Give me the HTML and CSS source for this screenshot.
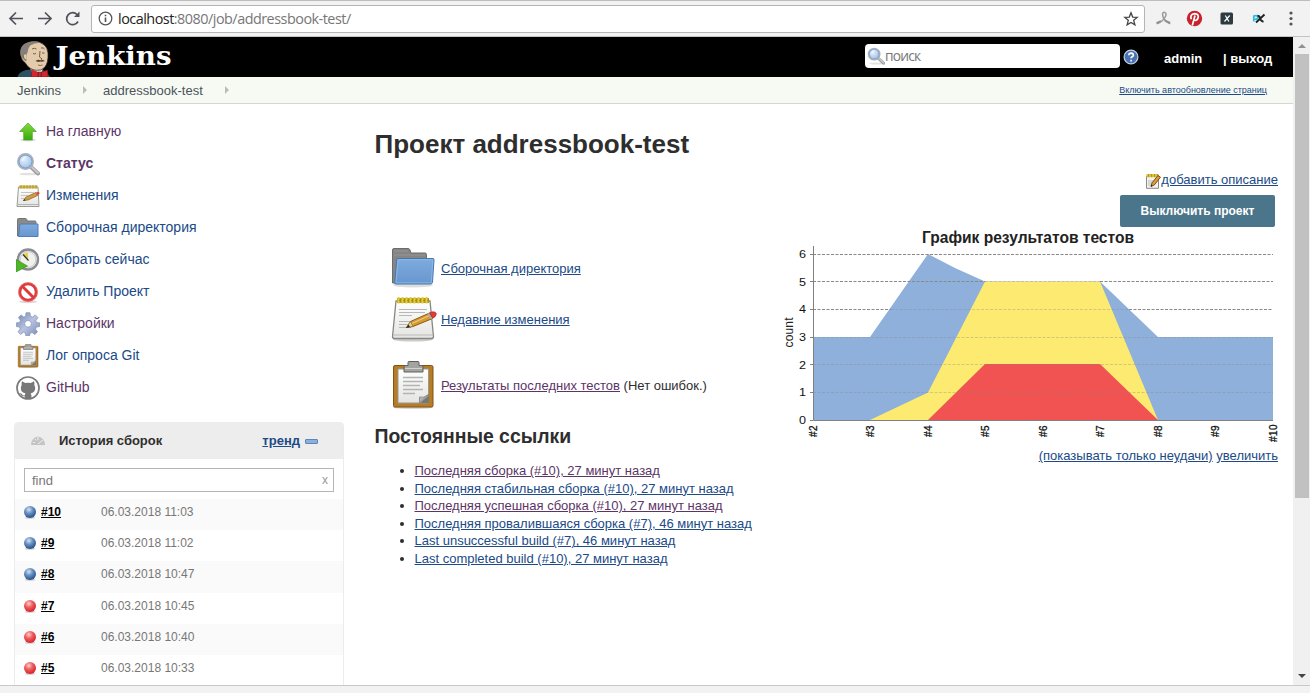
FILE: index.html
```html
<!DOCTYPE html>
<html lang="ru">
<head>
<meta charset="utf-8">
<title>addressbook-test [Jenkins]</title>
<link rel="stylesheet" href="styles.css">
</head>
<body>
<svg class="defs" width="0" height="0">
  <defs>
    <linearGradient id="gBlue" x1="0" y1="0" x2="0" y2="1"><stop offset="0" stop-color="#7fabdd"/><stop offset="1" stop-color="#6797d0"/></linearGradient>
    <linearGradient id="gPaper" x1="0" y1="0" x2="0" y2="1"><stop offset="0" stop-color="#fff"/><stop offset="1" stop-color="#e4e4e2"/></linearGradient>
    <linearGradient id="gGreen" x1="0" y1="0" x2="0" y2="1"><stop offset="0" stop-color="#86dc3c"/><stop offset="1" stop-color="#38a80c"/></linearGradient>
    <linearGradient id="gGear" x1="0" y1="0" x2="1" y2="1"><stop offset="0" stop-color="#6f82b4"/><stop offset=".5" stop-color="#b9c3df"/><stop offset="1" stop-color="#7285b5"/></linearGradient>
    <radialGradient id="gLens" cx=".4" cy=".35" r=".7"><stop offset="0" stop-color="#e6f1fb"/><stop offset="1" stop-color="#98bce3"/></radialGradient>
    <radialGradient id="gOk" cx=".4" cy=".3" r=".7"><stop offset="0" stop-color="#d5e3f2"/><stop offset=".45" stop-color="#6a93c4"/><stop offset="1" stop-color="#274f87"/></radialGradient>
    <radialGradient id="gBad" cx=".4" cy=".3" r=".7"><stop offset="0" stop-color="#fbd0d0"/><stop offset=".45" stop-color="#f06060"/><stop offset="1" stop-color="#d8202a"/></radialGradient>
    <symbol id="folder" viewBox="0 0 48 48">
      <ellipse cx="24" cy="41" rx="20" ry="2.500" fill="#ddd"/>
      <path d="M3.500 39V6q0-1.500 1.500-1.500H19q1.500 0 2 1.500l1 3H36q1.500 0 1.500 1.500V39z" fill="#858585" stroke="#6c6c6c"/>
      <path d="M5 7h14M5 11h31" stroke="#959595" fill="none"/>
      <path d="M9 14.500H44q1.200 0 1 1.500L43.500 38q-.3 2-2 2H7q-1.500 0-1.300-2L7.800 16q.2-1.500 1.200-1.500z" fill="url(#gBlue)" stroke="#4377b5"/>
      <path d="M9 15.700H43.800L42.300 38.800H7z" fill="none" stroke="#94badf" stroke-width=".8"/>
    </symbol>
    <symbol id="notepad" viewBox="0 0 48 48">
      <ellipse cx="24" cy="44.500" rx="20" ry="2" fill="#ccc"/>
      <path d="M7 6H41L44.500 41.500q0 2-2 2H5.500q-2 0-2-2z" fill="url(#gPaper)" stroke="#888883" stroke-width="1.300"/>
      <path d="M4.500 40H44" stroke="#bbb"/>
      <path d="M10 14.500H38M10 17.500H36M10 20.500H23M10 26.500H31M10 29.500H27M10 32.500H22" stroke="#b7b7b7" stroke-width="1.200"/>
      <path d="M8 3h32v5H8z" fill="#b39a10"/>
      <path d="M9.500 2v6.500M13.500 2v6.500M17.500 2v6.500M21.500 2v6.500M25.500 2v6.500M29.500 2v6.500M33.500 2v6.500M37.500 2v6.500" stroke="#e3cd45" stroke-width="2"/>
      <path d="M8.500 5.500h31" stroke="#917800" stroke-dasharray="1 3" stroke-dashoffset="-2"/>
      <path d="M17.500 32.500l4-6L40.500 18l3 5.500L24 31.500z" fill="#d39a35" stroke="#8c5b12"/>
      <path d="M23 28.500L41.500 20" stroke="#f1c873" stroke-width="1.300"/>
      <path d="M17.500 32.500l4-6 2.500 5z" fill="#e8cf9b" stroke="#8c6a35" stroke-width=".7"/>
      <path d="M17 33l2.500-3.200 1.500 2.300z" fill="#222"/>
      <path d="M38.500 18.800l2-1 3 5.500-2 1z" fill="#aaa"/>
      <path d="M40.500 17.800l2.500-.9q3.500-.4 4.300 1.500 0 3.300-3.500 4.700z" fill="#e33c36" stroke="#a82520" stroke-width=".7"/>
    </symbol>
    <symbol id="clipboard" viewBox="0 0 48 48">
      <ellipse cx="24" cy="46.500" rx="20" ry="1.300" fill="#ccc"/>
      <rect x="4.500" y="4.500" width="39.500" height="41.500" rx="1.500" fill="#b67c26" stroke="#815411"/>
      <path d="M9 8H39.500V42H9z" fill="url(#gPaper)" stroke="#999"/>
      <path d="M14 16.500H34M14 20.500H34M14 24.500H31M14 28.500H34M14 32.500H26" stroke="#b3b3b3" stroke-width="1.500"/>
      <path d="M30.500 42V36q4 1.500 9-2.500z" fill="#b1b1ae" stroke="#777" stroke-width=".7"/>
      <path d="M31 42l9-8v8z" fill="#777"/>
      <path d="M15 11V6q0-1.500 1.500-1.500H19V1.500q0-1 1-1h9q1 0 1 1v3h2.500q1.500 0 1.500 1.500v5z" fill="#a3a49f" stroke="#5f605d"/>
      <path d="M16 7.500H33" stroke="#d1d2ce"/>
    </symbol>
    <symbol id="lens" viewBox="0 0 24 24">
      <ellipse cx="13" cy="22" rx="10" ry="1.300" fill="#e2e2e2"/>
      <path d="M15 15l7 6.500" stroke="#9a9a9a" stroke-width="4" stroke-linecap="round"/>
      <path d="M15.500 15l6.500 6" stroke="#c9c9c9" stroke-width="2" stroke-linecap="round"/>
      <circle cx="9.500" cy="9.500" r="7.500" fill="url(#gLens)" stroke="#aab1bd" stroke-width="2"/>
      <circle cx="9.500" cy="9.500" r="6.400" fill="none" stroke="#6d98cf" stroke-width=".8"/>
      <path d="M6 9q.5-3.500 4-4" stroke="#fff" fill="none"/>
    </symbol>
    <symbol id="ball-ok" viewBox="0 0 14 14"><ellipse cx="7" cy="12.700" rx="5" ry="1" fill="#ccc"/><circle cx="7" cy="7" r="6" fill="url(#gOk)"/></symbol>
    <symbol id="ball-bad" viewBox="0 0 14 14"><ellipse cx="7" cy="12.700" rx="5" ry="1" fill="#ccc"/><circle cx="7" cy="7" r="6" fill="url(#gBad)"/></symbol>
  </defs>
</svg>

<div class="window">
  <div class="toolbar">
    <svg class="nav" width="72" height="20" viewBox="0 0 72 20" fill="none" stroke="#50525a" stroke-width="1.700">
      <path d="M15 9.500H2.500M8 3.500l-6 6 6 6"/>
      <path d="M30 9.500H42.500M37 3.500l6 6-6 6"/>
      <path d="M70 12.500A6 6 0 1 1 69 5.500"/><path d="M71.500 2.500V8h-5.500z" fill="#50525a" stroke="none"/>
    </svg>
    <div class="address">
      <svg width="15" height="15" viewBox="0 0 15 15" fill="none" stroke="#555" stroke-width="1.300"><circle cx="7.500" cy="7.500" r="6.300"/><path d="M7.500 6.500v4.500M7.500 3.700v1.600" stroke-width="1.600"/></svg>
      <span class="url"><b>localhost</b>:8080/job/addressbook-test/</span>
      <svg class="star" width="16" height="16" viewBox="0 0 16 16" fill="none" stroke="#444" stroke-width="1.300"><path d="M8 1.800l1.700 4.300 4.500.3-3.500 2.900 1.200 4.600L8 11.400l-3.900 2.500 1.200-4.600L1.800 6.400l4.500-.3z"/></svg>
    </div>
    <svg class="exts" width="150" height="20" viewBox="0 0 150 20">
      <path d="M7.500 5q.5-2 2.200-1.600 2 .6 1 3.600Q8.500 12 2.500 14.500M7.500 5q0 3.500 2.500 6t5 3" fill="none" stroke="#999" stroke-width="1.500"/>
      <path d="M1 13.300l4.500-2 .8 1.500-4.300 2.800zM9.500 10.500l6 2.500-.5 2.500-5.500-3z" fill="#929292"/>
      <circle cx="39.500" cy="9.500" r="7.700" fill="#c8232c"/>
      <path d="M37.300 16.500L40 6.500M36.300 10.300Q34.500 5.200 39.700 4.700 44.300 5 43 9.200 41.500 12.600 38.800 10.900" fill="none" stroke="#fff" stroke-width="1.700"/>
      <rect x="65.500" y="3.500" width="12.500" height="12" rx="1.500" fill="#2c3a42"/>
      <path d="M70.300 6.500l3.600 6M74.700 6.500l-5.200 6" stroke="#fff" stroke-width="1.200"/>
      <path d="M98.800 12.500V7q3-1 4.200.5.500 2.500-3.500 3" fill="none" stroke="#25c0de" stroke-width="1.700"/>
      <path d="M101 13.500L109.500 5.500M102.500 6.800q2 0 2.500 2.500t3.500 3.500" fill="none" stroke="#202427" stroke-width="1.900"/>
      <g fill="#555"><circle cx="136" cy="4" r="1.600"/><circle cx="136" cy="9.500" r="1.600"/><circle cx="136" cy="15" r="1.600"/></g>
    </svg>
  </div>

  <div class="viewport">
    <div class="page">
      <header class="header">
        <svg class="brand" width="160" height="40" viewBox="0 0 160 40">
          <path d="M1.500 40Q2.500 35 10 33l14-1q6 1 10 8z" fill="#2c5263"/>
          <path d="M14 31l4 9h6l3-9z" fill="#eee"/>
          <path d="M4.500 16Q5 5 18 4.500 31 5 32 16q.5 10-3.500 14.500-3 3.500-8 2.800-7.500-.5-11.500-7.800-4-2-4.500-9.500z" fill="#e3cbab" stroke="#2a2521" stroke-width=".7"/>
          <path d="M4.500 18Q2.500 6 16 4.500q5-.6 9 1.300-6-.3-10.500 2.500-3 3-2.800 6.700l-1.200 2.500-.3 6.700q-4.300-2.200-5.700-6.200z" fill="#85807b"/>
          <path d="M10 17q-3-1-2.500 3 .5 3 3 3" fill="#e3cbab" stroke="#6d5949" stroke-width=".7"/>
          <path d="M24 14l-.5 6q3.500 1.500 2 3.500M16 12q2.500-1.500 4.500 0M25 11q2.500-.7 3.500 1M17 16.500q1.500.8 3 0M26 16h2.500" fill="none" stroke="#54453a" stroke-width=".8"/>
          <path d="M19.500 24q2.500-2.300 5.500-.7 2-.8 4 .7-3 1.200-4.500.5-2 1-5-.5z" fill="#5a4435"/>
          <path d="M22 28q2.500 1 4.500 0" stroke="#8b4c3e" stroke-width=".8" fill="none"/>
          <path d="M15.500 32.500l7 3v4.500h-7zM31.500 33l-6.500 2.500v4.500h7zM22 35h3.500v5H22z" fill="#d3272e" stroke="#6f1619" stroke-width=".5"/>
          <text class="brand-name" x="39.500" y="28" textLength="116" lengthAdjust="spacingAndGlyphs">Jenkins</text>
        </svg>
        <div class="search"><svg width="18" height="18"><use href="#lens"/></svg><span>поиск</span></div>
        <svg class="help" width="16" height="16" viewBox="0 0 16 16"><circle cx="8" cy="8" r="6.900" fill="#4b72b3" stroke="#c2d1e8" stroke-width="1.200"/><path d="M5.700 6.300q.2-2.200 2.400-2.200 2.300.1 2.300 2Q10.300 7.300 8.800 8q-.7.400-.7 1.300M8.100 10.700v1.700" fill="none" stroke="#fff" stroke-width="1.600"/></svg>
        <a class="user">admin</a>
        <span class="logout">| <a>выход</a></span>
      </header>
      <nav class="crumbs">
        <a>Jenkins</a><i class="arrow"></i><a>addressbook-test</a><i class="arrow"></i>
        <a class="auto">Включить автообновление страниц</a>
      </nav>

      <div class="body">
        <aside class="side">
          <div class="tasks">
            <a class="task seen"><svg width="24" height="24" viewBox="0 0 24 24"><ellipse cx="12" cy="20" rx="8" ry="1.500" fill="#ddd"/><path d="M12 3l8.300 8.500h-4V20H7.700v-8.500h-4z" fill="url(#gGreen)" stroke="#45a51d" stroke-width=".7"/></svg>На главную</a>
            <a class="task seen current"><svg width="24" height="24"><use href="#lens"/></svg>Статус</a>
            <a class="task"><svg width="24" height="24" viewBox="0 0 24 24"><path d="M2.500 3H22L23 22.500H1z" fill="url(#gPaper)" stroke="#9a9a96"/><path d="M1.500 20.500H22.500" stroke="#b5b5b5"/><path d="M5 8.500H18M5 11.500H12M5 14.500H10" stroke="#c4c4c4"/><path d="M3 1.500H21.500V4.500H3z" fill="#cdb84a"/><path d="M5 1v3.500M8 1v3.500M11 1v3.500M14 1v3.500M17 1v3.500M20 1v3.500" stroke="#9f8c2b" stroke-width=".8"/><path d="M7.500 16.500L10 13l10-4.500 1.500 3L12 16z" fill="#d19a45" stroke="#8b5c1b" stroke-width=".7"/><path d="M20 8.500l2-.7q2 .7 1.500 2l-2 1.700z" fill="#df4a40"/><path d="M7 17l1.500-2 1 1.500z" fill="#333"/></svg>Изменения</a>
            <a class="task"><svg width="24" height="24" viewBox="0 0 24 24"><path d="M1.500 20V3.500q0-1 1-1H9.500q1 0 1.300 1L11 5h8q1 0 1 1v14z" fill="#8a8a8a" stroke="#747474"/><path d="M4 8H22V20.500H2.500z" fill="url(#gBlue)" stroke="#4d7fb9"/></svg>Сборочная директория</a>
            <a class="task"><svg width="24" height="24" viewBox="0 0 24 24"><circle cx="12" cy="11.500" r="10" fill="#f1f1ec" stroke="#8b8b95" stroke-width="2.400"/><circle cx="12" cy="11.500" r="7.800" fill="none" stroke="#bbb" stroke-width=".7"/><path d="M12 11.500V4.500Q8 5 6.500 7z" fill="#e5d04c"/><path d="M7 6.500l5.500 6" fill="none" stroke="#333" stroke-width="1.200"/><path d="M0 11.500l11.500 6.500L0 24z" fill="#4fb52a" stroke="#36921c" stroke-width=".7"/></svg>Собрать сейчас</a>
            <a class="task"><svg width="24" height="24" viewBox="0 0 24 24"><ellipse cx="12" cy="21.800" rx="9" ry="1.500" fill="#e3d4d4"/><circle cx="12" cy="12" r="8.300" fill="#fff" stroke="#dc3a3c" stroke-width="3"/><path d="M6.300 6.300l11.400 11.400" stroke="#dc3a3c" stroke-width="3"/><circle cx="12" cy="12" r="9.400" fill="none" stroke="#ec8585" stroke-width=".6"/></svg>Удалить Проект</a>
            <a class="task seen"><svg width="24" height="24" viewBox="0 0 24 24"><path fill-rule="evenodd" d="M10 .7h4l.5 3.500 2 .9 2.800-2.200 2.700 2.700-2.200 3 .8 2 3.300.3v3.600l-3.500.6-.9 2 2 2.800-2.700 2.600-2.700-2-2 .8-.6 3h-3.600l-.5-3.200-2-.8-2.800 2.100-2.600-2.600L4.200 17l-.8-2-3.200-.5v-3.600l3.300-.5.9-2.100-2-2.800L5 2.900 7.800 5l1.800-.8zM12 8.500a3.300 3.300 0 1 0 .01 0z" fill="url(#gGear)" stroke="#8493b8" stroke-width=".7"/></svg>Настройки</a>
            <a class="task"><svg width="24" height="24"><use href="#clipboard"/></svg>Лог опроса Git</a>
            <a class="task seen"><svg width="24" height="24" viewBox="0 0 24 24"><circle cx="12" cy="12" r="11" fill="#fff" stroke="#7b7b7b" stroke-width="1.700"/><path d="M6 5.300l3.300 1.800q2.700-.6 5.400 0L18 5.300q.8 2 .3 3.700 1.300 1.800.8 4.300-.6 3.500-4.500 4.100.8.800.8 2V23H8.800v-2.800q-3.500.5-4.500-2.200l-1-1q2-.3 3.100 1.800.8 1 2.400.5.1-1.200.8-1.900-4.200-.6-4.700-4.100-.4-2.500.8-4.300-.5-1.700.3-3.700z" fill="#777"/></svg>GitHub</a>
          </div>

          <section class="history">
            <div class="history-head">
              <svg width="16" height="16" viewBox="0 0 16 16"><path d="M1 12Q1 5 8 3.500q7 1.500 7 8.500z" fill="#c4c4c4"/><path d="M8 4v3M3 9.500h2M5 6l1.500 1.500M8 11l5-4" stroke="#eee" fill="none"/></svg>
              <b>История сборок</b>
              <a>тренд</a><i class="collapse"></i>
            </div>
            <div class="find"><span>find</span><span class="clear">x</span></div>
            <div class="build"><svg width="14" height="14"><use href="#ball-ok"/></svg><a>#10</a><span>06.03.2018 11:03</span></div>
            <div class="build"><svg width="14" height="14"><use href="#ball-ok"/></svg><a>#9</a><span>06.03.2018 11:02</span></div>
            <div class="build"><svg width="14" height="14"><use href="#ball-ok"/></svg><a>#8</a><span>06.03.2018 10:47</span></div>
            <div class="build"><svg width="14" height="14"><use href="#ball-bad"/></svg><a>#7</a><span>06.03.2018 10:45</span></div>
            <div class="build"><svg width="14" height="14"><use href="#ball-bad"/></svg><a>#6</a><span>06.03.2018 10:40</span></div>
            <div class="build"><svg width="14" height="14"><use href="#ball-bad"/></svg><a>#5</a><span>06.03.2018 10:33</span></div>
          </section>
        </aside>

        <main class="main">
          <h1>Проект addressbook-test</h1>
          <div class="describe"><svg width="16" height="16" viewBox="0 0 16 16"><path d="M1.500 3H13.500V15.300H1.500z" fill="#f1f1ef" stroke="#8a8a86"/><path d="M3 8h6M3 10h5M3 12h4" stroke="#bbb"/><path d="M1.500 1h12v3.300h-12z" fill="#dcc238"/><path d="M3.500 1v3M6.500 1v3M9.500 1v3M12.500 1v3" stroke="#a38c1c" stroke-width=".8"/><path d="M6 13.500l1-3.700L13 2.500l2.500 1.700L9.300 12z" fill="#d79b3b" stroke="#6e4510" stroke-width=".9"/><path d="M5.800 13.700l.5-2 1.300 1z" fill="#222"/></svg><a>добавить описание</a></div>
          <div class="actions"><button class="disable">Выключить проект</button></div>
          <div class="columns">
            <div class="left">
              <div class="summary"><svg width="48" height="48"><use href="#folder"/></svg><a>Сборочная директория</a></div>
              <div class="summary"><svg width="48" height="48"><use href="#notepad"/></svg><a>Недавние изменения</a></div>
              <div class="summary tests"><svg width="48" height="48"><use href="#clipboard"/></svg><a class="seen">Результаты последних тестов</a><span>&nbsp;(Нет ошибок.)</span></div>
              <h2>Постоянные ссылки</h2>
              <ul class="links">
                <li><a class="seen">Последняя сборка (#10), 27 минут назад</a></li>
                <li><a>Последняя стабильная сборка (#10), 27 минут назад</a></li>
                <li><a class="seen">Последняя успешная сборка (#10), 27 минут назад</a></li>
                <li><a>Последняя провалившаяся сборка (#7), 46 минут назад</a></li>
                <li><a>Last unsuccessful build (#7), 46 минут назад</a></li>
                <li><a>Last completed build (#10), 27 минут назад</a></li>
              </ul>
            </div>
            <div class="trend">
              <svg class="chart" width="500" height="219" viewBox="780 227 500 219">
                <text class="chart-title" x="922" y="243" textLength="212" lengthAdjust="spacingAndGlyphs">График результатов тестов</text>
                <path d="M813 420V337H870L928 254L955 268L985 281.500H1100L1158 337H1273V420z" fill="#8eb0da"/>
                <path d="M870 420L928 392.500L985 281.500H1100L1158 420z" fill="#fceb70"/>
                <path d="M928 420L985 364H1100L1158 420z" fill="#f15352"/>
                <path class="grid" d="M813 254.500H1273M813 281.500H985M1100 281.500H1273M813 309.500H891M1129 309.500H1273"/>
                <path class="grid faint" d="M985 281.500H1100M891 309.500H1129M813 337.500H1273M813 364.500H1273M813 392.500H1273"/>
                <path class="axis" d="M813.500 246V420.500H1273M810 254.500h3M810 281.500h3M810 309.500h3M810 337.500h3M810 364.500h3M810 392.500h3M810 420.500h3"/>
                <g class="ticks">
                  <text x="799" y="258" textLength="7" lengthAdjust="spacingAndGlyphs">6</text><text x="799" y="286" textLength="7" lengthAdjust="spacingAndGlyphs">5</text><text x="799" y="313" textLength="7" lengthAdjust="spacingAndGlyphs">4</text><text x="799" y="341" textLength="7" lengthAdjust="spacingAndGlyphs">3</text><text x="799" y="369" textLength="7" lengthAdjust="spacingAndGlyphs">2</text><text x="799" y="396" textLength="7" lengthAdjust="spacingAndGlyphs">1</text><text x="799" y="424" textLength="7" lengthAdjust="spacingAndGlyphs">0</text>
                  <g class="builds"><text transform="translate(816.500 437) rotate(-90)">#2</text><text transform="translate(873.500 437) rotate(-90)">#3</text><text transform="translate(931.500 437) rotate(-90)">#4</text><text transform="translate(988.500 437) rotate(-90)">#5</text><text transform="translate(1046.500 437) rotate(-90)">#6</text><text transform="translate(1103.500 437) rotate(-90)">#7</text><text transform="translate(1161.500 437) rotate(-90)">#8</text><text transform="translate(1218.500 437) rotate(-90)">#9</text><text transform="translate(1276.500 442) rotate(-90)">#10</text></g>
                </g>
                <text class="axis-name" transform="translate(793 347.500) rotate(-90)" textLength="30">count</text>
              </svg>
              <div class="trend-links"><a>(показывать только неудачи)</a> <a>увеличить</a></div>
            </div>
          </div>
        </main>
      </div>
    </div>
    <div class="scrollbar"><i class="up"></i><i class="thumb"></i><i class="down"></i></div>
  </div>
  <div class="bottom-strip"></div>
</div>
</body>
</html>
```
FILE: styles.css
```css
* { box-sizing: border-box; }
body { margin: 0; font-family: "Liberation Sans", Arial, sans-serif; font-size: 13px; color: #2e2e2e; background: #fff; overflow: hidden; }
.defs { position: absolute; }
svg { flex: none; display: block; }
a { color: #204a87; text-decoration: underline; }
.seen { color: #5c3566; }
.window { width: 1310px; height: 693px; display: flex; flex-direction: column; }

.toolbar { height: 37px; flex: none; display: flex; align-items: center; background: #f2f2f2; border-top: 1px solid #bdbdbd; border-bottom: 1px solid #c4c4c4; padding-left: 8px; }
.nav { margin-right: 11px; }
.address { width: 1054px; height: 28px; display: flex; align-items: center; background: #fff; border: 1px solid #b5b5b5; border-radius: 3px; padding: 0 5px 0 6px; }
.url { margin-left: 5px; font-family: "Open Sans", sans-serif; font-size: 14.4px; letter-spacing: -0.5px; color: #777; white-space: nowrap; }
.url b { font-weight: 400; color: #222; }
.star { margin-left: auto; }
.exts { margin-left: 10px; }

.viewport { height: 648px; flex: none; display: flex; overflow: hidden; }
.page { width: 1293px; height: 648px; overflow: hidden; }
.header { height: 40px; background: #000; display: flex; align-items: center; padding-left: 16px; color: #fff; font-weight: bold; }
.brand-name { font-family: "DejaVu Serif", serif; font-weight: bold; font-size: 26px; fill: #fff; }
.search { width: 255px; height: 24px; margin: 0 4px 2px 689px; display: flex; align-items: center; padding-left: 2px; background: #fff; border-radius: 4px; font: 13.8px "Open Sans", sans-serif; letter-spacing: -0.9px; color: #777; }
.search span { margin-top: -2px; letter-spacing: -0.8px; }
.help { margin: 0 25px 1px -1px; }
.user { width: 59px; color: #fff; text-decoration: none; padding-top: 2px; }
.logout { white-space: nowrap; padding-top: 2px; }
.logout a { color: #fff; text-decoration: none; }
.crumbs { height: 27px; display: flex; align-items: center; padding: 0 26px 0 17px; background: #f6faf2; border-bottom: 1px solid #d3d7cf; }
.crumbs a { color: #4d545d; text-decoration: none; }
.arrow { border-left: 4px solid #bbb; border-top: 4px solid transparent; border-bottom: 4px solid transparent; margin: 0 16px 0 22px; }
.crumbs .auto { margin-left: auto; font-size: 9px; color: #204a87; text-decoration: underline; white-space: nowrap; }

.body { display: flex; }
.side { width: 359px; flex: none; padding: 11px 15px 0; }
.task { display: flex; align-items: center; height: 32px; padding-left: 1px; gap: 6px; font-size: 14px; text-decoration: none; line-height: 26px; }
.task svg { margin-top: 2px; }
.current { font-weight: bold; }
.history { margin: 19px 0 0 -1px; width: 330px; height: 300px; border: 1px solid #ececec; border-radius: 4px 4px 0 0; }
.history-head { height: 36px; display: flex; align-items: center; padding: 0 25px 0 15px; background: #ededed; font-size: 13px; }
.history-head b { margin-left: 13px; margin-top: -1px; flex: 1; }
.history-head a { font-weight: bold; margin-top: -1px; }
.collapse { width: 13px; height: 5px; margin: 1px 0 0 5px; background: #8bb0dd; border: 1px solid #5f86b8; border-radius: 1px; }
.find { height: 24px; margin: 9px 9px 7px; display: flex; align-items: center; justify-content: space-between; padding: 0 5px 0 7px; border: 1px solid #b5b5b5; color: #777; }
.clear { font-size: 12px; color: #999; }
.build { height: 31.200px; display: flex; align-items: center; padding: 0 0 5px 7.500px; font-size: 12px; color: #777; }
.build:nth-child(odd) { background: #fafafa; }
.build a { width: 60px; margin-left: 4.500px; font-weight: bold; color: #000; }

.main { width: 934px; padding: 24px 15px 0 15.500px; }
h1 { margin: 0; font-size: 26px; line-height: 32px; }
.describe { display: flex; justify-content: flex-end; align-items: center; height: 16px; margin-top: 12px; white-space: nowrap; }
.describe svg { margin-top: 2px; }
.describe a { margin-top: -1px; }
.actions { display: flex; justify-content: flex-end; padding: 7px 3px 0 0; }
.disable { width: 155px; height: 32px; border: 0; border-radius: 2px; background: #4b758b; color: #fff; font: bold 12px "Liberation Sans", Arial, sans-serif; }
.columns { display: flex; justify-content: space-between; }
.left { width: 400px; padding-top: 17px; }
.summary { display: flex; align-items: center; height: 48px; padding-left: 14.500px; margin-bottom: 3px; white-space: nowrap; }
.summary svg { margin-right: 4px; }
.tests { margin: 18px 0 0; }
h2 { margin: 16px 0 15px; font-size: 19.400px; line-height: 22px; }
.links { margin: 0; padding-left: 40px; line-height: 17.600px; white-space: nowrap; }
.chart { margin-right: -2px; }
.chart-title { font-size: 16px; font-weight: bold; fill: #222; }
.grid { stroke: #888; stroke-dasharray: 3 1.500; fill: none; }
.faint { opacity: .35; }
.axis { stroke: #808080; fill: none; }
.ticks { font-size: 10px; fill: #111; }
.builds { stroke: #111; stroke-width: .3; letter-spacing: .4px; }
.axis-name { font-size: 12px; fill: #222; }
.trend-links { text-align: right; margin-top: 2px; white-space: nowrap; }

.scrollbar { width: 17px; background: #f0f0f0; display: flex; flex-direction: column; align-items: center; }
.up { margin-top: 7px; border: 4px solid transparent; border-top: 0; border-bottom: 4px solid #909090; }
.thumb { width: 14px; height: 444px; margin-top: 6px; background: #c1c1c1; }
.down { margin-top: auto; margin-bottom: 7px; border: 4px solid transparent; border-bottom: 0; border-top: 4px solid #444; }
.bottom-strip { flex: 1; background: #f2f2f2; border-top: 1px solid #c9c9c9; }
```
